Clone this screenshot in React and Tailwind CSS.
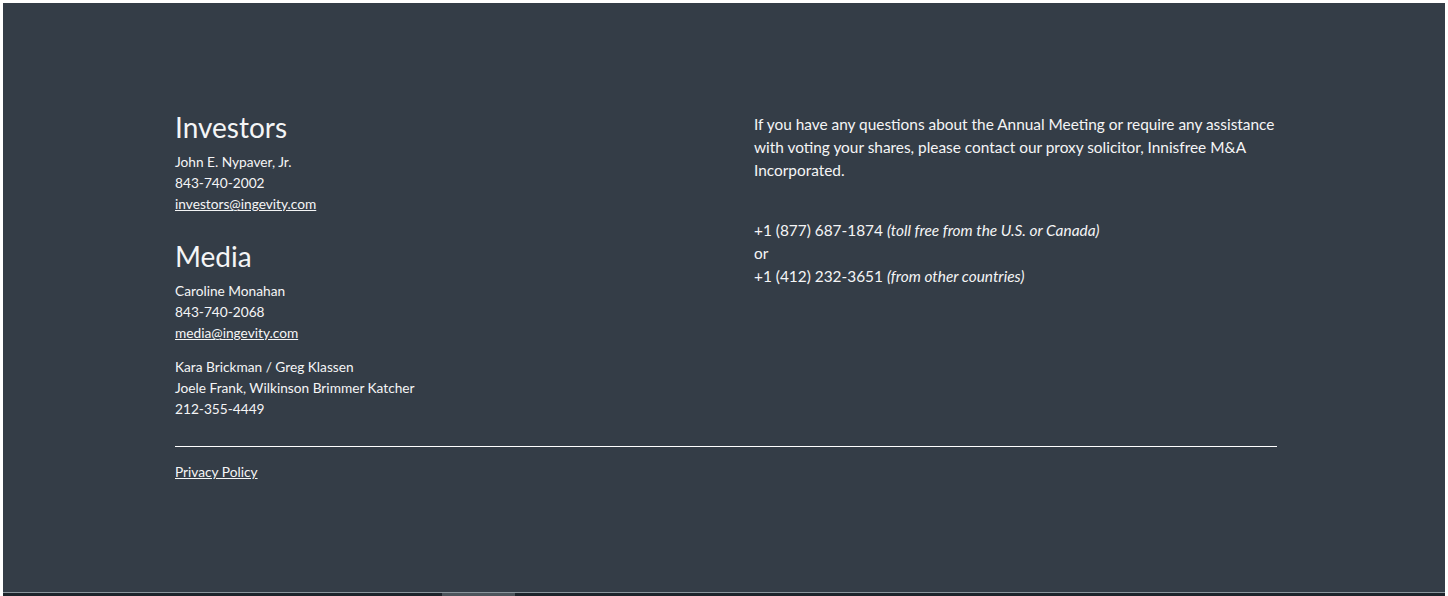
import React from "react";

export default function App() {
  return (
    <div className="w-[1448px] h-[596px] bg-white pl-[3px] pt-[3px] pr-[3px] flex flex-col overflow-hidden">
      <div
        className="flex-1 bg-[#343d47] text-[#f4f5f6]"
        style={{ fontFamily: "Lato, 'Noto Sans', sans-serif" }}
      >
        <div className="w-[1102px] ml-[172px] pt-[107px]">
          <div className="grid grid-cols-[551px_1fr] gap-[28px]">
            <div>
              <h2 className="text-[28px] leading-[34px]">Investors</h2>
              <div className="mt-[7px] text-[13.7px] leading-[21px]">
                <p>John E. Nypaver, Jr.</p>
                <p>843-740-2002</p>
                <p>
                  <a href="#" className="underline">investors@ingevity.com</a>
                </p>
              </div>
              <h2 className="mt-[25px] text-[28px] leading-[34px]">Media</h2>
              <div className="mt-[7px] text-[13.7px] leading-[21px]">
                <p>Caroline Monahan</p>
                <p>843-740-2068</p>
                <p>
                  <a href="#" className="underline">media@ingevity.com</a>
                </p>
              </div>
              <div className="mt-[13px] text-[13.7px] leading-[21px]">
                <p>Kara Brickman / Greg Klassen</p>
                <p>Joele Frank, Wilkinson Brimmer Katcher</p>
                <p>212-355-4449</p>
              </div>
            </div>
            <div className="pt-[3px] text-[15.4px] leading-[23px]">
              <p className="whitespace-nowrap">
                If you have any questions about the Annual Meeting or require any assistance
                <br />
                with voting your shares, please contact our proxy solicitor, Innisfree M&amp;A
                <br />
                Incorporated.
              </p>
              <p className="mt-[37px]">
                +1 (877) 687-1874 <em>(toll free from the U.S. or Canada)</em>
              </p>
              <p>or</p>
              <p>
                +1 (412) 232-3651 <em>(from other countries)</em>
              </p>
            </div>
          </div>
          <div className="mt-[27px] h-px bg-white w-[1102px]"></div>
          <div className="mt-[14px] text-[13.7px] leading-[21px]">
            <a href="#" className="underline">Privacy Policy</a>
          </div>
        </div>
      </div>
      <div className="h-px bg-[#8a959c]"></div>
      <div className="h-[3px] bg-[#1c242b] relative">
        <div className="absolute left-[439px] w-[73px] top-0 bottom-0 bg-[#4c555c]"></div>
      </div>
    </div>
  );
}
